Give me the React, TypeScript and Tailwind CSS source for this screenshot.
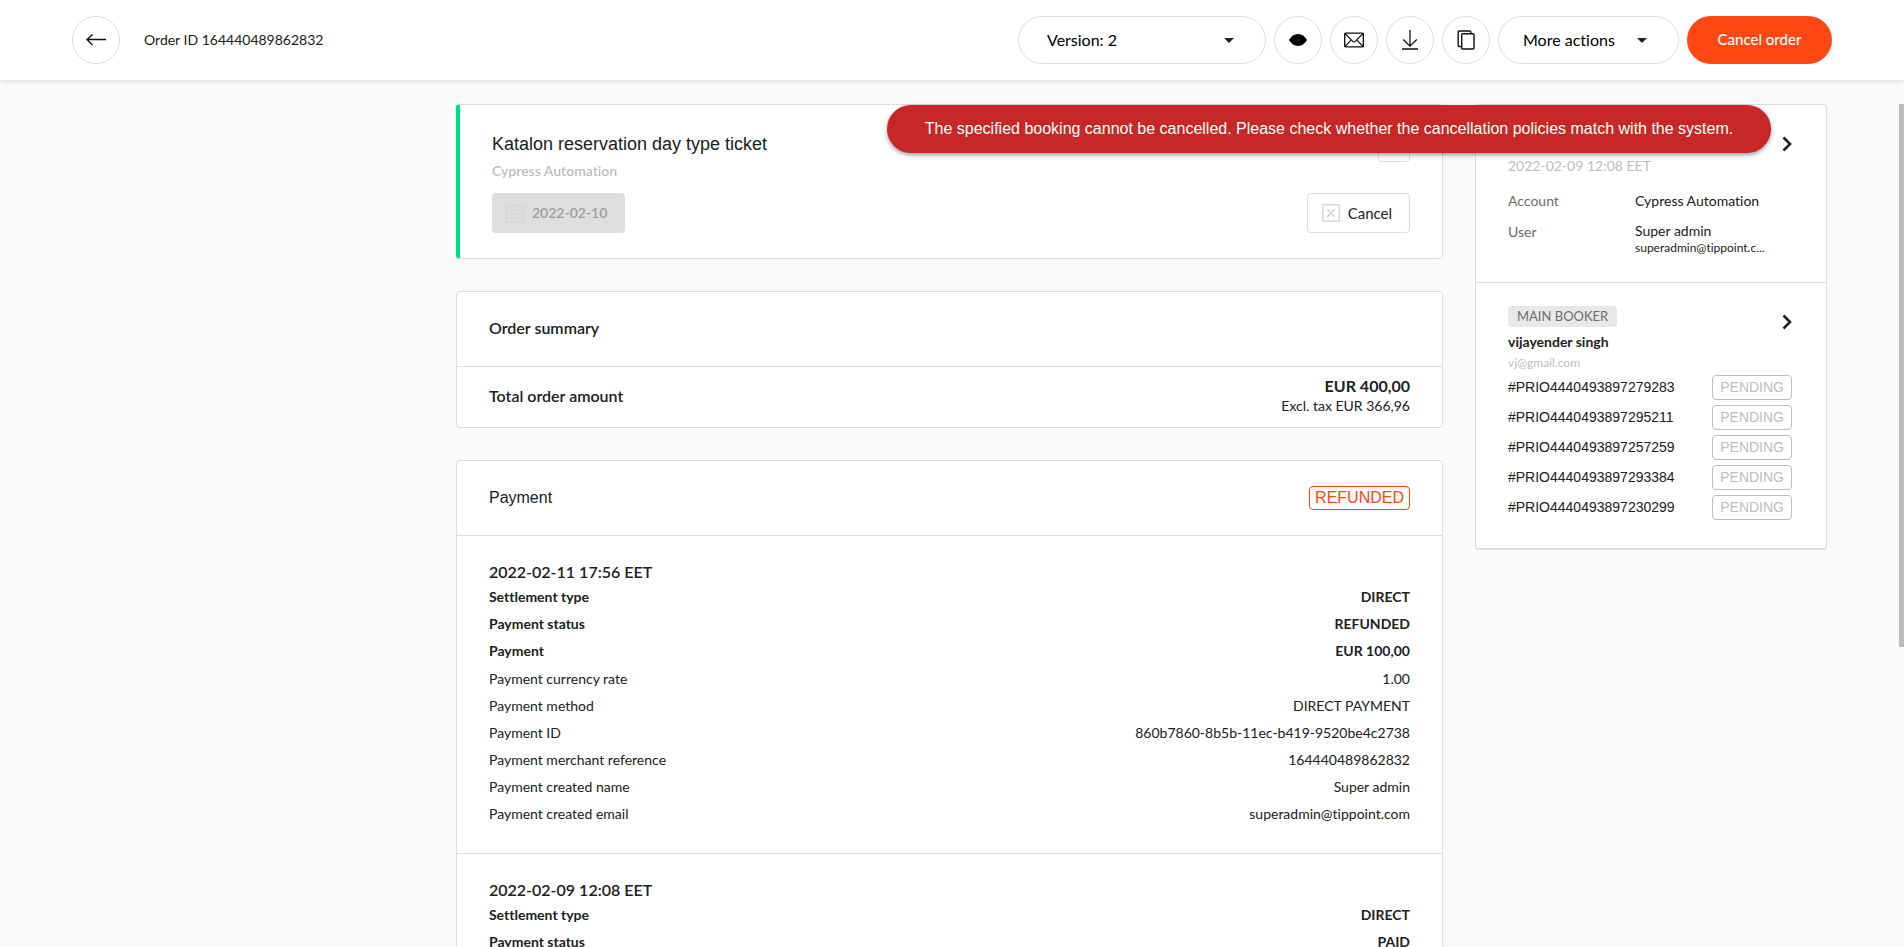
import type { ReactNode } from "react";

type Row = { label: string; value: string; strong?: boolean };

const refund: Row[] = [
  { label: "Settlement type", value: "DIRECT", strong: true },
  { label: "Payment status", value: "REFUNDED", strong: true },
  { label: "Payment", value: "EUR 100,00", strong: true },
  { label: "Payment currency rate", value: "1.00" },
  { label: "Payment method", value: "DIRECT PAYMENT" },
  { label: "Payment ID", value: "860b7860-8b5b-11ec-b419-9520be4c2738" },
  { label: "Payment merchant reference", value: "164440489862832" },
  { label: "Payment created name", value: "Super admin" },
  { label: "Payment created email", value: "superadmin@tippoint.com" },
];

const paid: Row[] = [
  { label: "Settlement type", value: "DIRECT", strong: true },
  { label: "Payment status", value: "PAID", strong: true },
];

const bookings = [
  "#PRIO4440493897279283",
  "#PRIO4440493897295211",
  "#PRIO4440493897257259",
  "#PRIO4440493897293384",
  "#PRIO4440493897230299",
];

function RoundButton({ label, children }: { label: string; children: ReactNode }) {
  return (
    <button
      type="button"
      aria-label={label}
      className="flex size-12 shrink-0 items-center justify-center rounded-full border border-[#dcdcdc] bg-white text-[#111]"
    >
      {children}
    </button>
  );
}

function Caret() {
  return (
    <svg width="10" height="5" viewBox="0 0 10 5" fill="#212121" aria-hidden="true">
      <path d="M0 0h10L5 5z" />
    </svg>
  );
}

function Chevron({ label }: { label: string }) {
  return (
    <button type="button" aria-label={label} className="flex h-6 w-3 items-center justify-end text-[#212121]">
      <svg width="10" height="16" viewBox="0 0 10 16" fill="none" stroke="currentColor" strokeWidth="2.6" aria-hidden="true">
        <path d="M1.500 1.500 8 8l-6.500 6.500" />
      </svg>
    </button>
  );
}

function Header() {
  return (
    <header className="relative z-10 flex h-20 shrink-0 items-center gap-2 bg-white px-[72px] shadow-[0_1px_5px_rgba(0,0,0,0.14)]">
      <RoundButton label="Back">
        <svg width="20" height="12" viewBox="0 0 20 12" fill="none" stroke="currentColor" strokeWidth="1.400" aria-hidden="true">
          <path d="M20 5.500H1M6.500 0.500 1 5.500l5.500 5.500" />
        </svg>
      </RoundButton>
      <h1 className="ml-4 flex-1 text-sm">Order ID 164440489862832</h1>
      <div className="relative flex items-center">
        <select
          aria-label="Order version"
          className="h-12 w-[248px] appearance-none rounded-full border border-[#dcdcdc] bg-white pl-7 text-base text-black"
        >
          <option>Version: 2</option>
        </select>
        <span className="pointer-events-none absolute right-8">
          <Caret />
        </span>
      </div>
      <RoundButton label="View order">
        <svg width="18" height="12" viewBox="0 0 18 12" aria-hidden="true">
          <path d="M0 6C2.200 2.200 5.300 0 9 0s6.800 2.200 9 6c-2.200 3.800-5.300 6-9 6S2.200 9.800 0 6z" fill="#000" />
          <circle cx="9" cy="6" r="2.200" fill="#141414" />
        </svg>
      </RoundButton>
      <RoundButton label="Email order">
        <svg width="20" height="16" viewBox="0 0 20 16" fill="none" stroke="currentColor" aria-hidden="true">
          <rect x="0.650" y="1.150" width="18.700" height="13.700" rx="1" strokeWidth="1.400" />
          <path d="M1 1.500 8.800 9.300a1.700 1.700 0 0 0 2.400 0L19 1.500M1 14.500l6.300-6.600M19 14.500l-6.300-6.600" strokeWidth="1.100" />
        </svg>
      </RoundButton>
      <RoundButton label="Download order">
        <svg width="18" height="20" viewBox="0 0 18 20" fill="none" stroke="currentColor" strokeWidth="1.300" aria-hidden="true">
          <path d="M9 0v16M2.200 9.500 9 16.200l6.800-6.700M1 19h16" />
        </svg>
      </RoundButton>
      <RoundButton label="Copy order">
        <svg width="18" height="20" viewBox="0 0 18 20" fill="none" stroke="currentColor" strokeWidth="1.400" aria-hidden="true">
          <rect x="4.700" y="3.700" width="12.300" height="15.300" rx="1" />
          <path d="M4.500 16.500H2.200a1 1 0 0 1-1-1V2a1 1 0 0 1 1-1h10.600a1 1 0 0 1 1 1v1.500" />
        </svg>
      </RoundButton>
      <button
        type="button"
        className="flex h-12 w-[181px] items-center justify-between rounded-full border border-[#dcdcdc] bg-white pr-[31px] pl-6 text-base text-black"
      >
        More actions
        <Caret />
      </button>
      <button type="button" className="h-12 w-[145px] rounded-full bg-[#ff4713] pb-0.5 text-[15px] font-medium text-white">
        Cancel order
      </button>
    </header>
  );
}

function PaymentSection({ title, rows }: { title: string; rows: Row[] }) {
  return (
    <section className="border-t border-[#dcdcdc] px-8 pt-6 pb-[26px]">
      <h3 className="text-base leading-6 font-semibold">{title}</h3>
      <dl className="text-sm">
        {rows.map((row) => (
          <div
            key={row.label}
            className={
              row.strong
                ? "flex h-[27px] items-center justify-between pb-0.5 font-bold"
                : "flex h-[27px] items-center justify-between"
            }
          >
            <dt>{row.label}</dt>
            <dd>{row.value}</dd>
          </div>
        ))}
      </dl>
    </section>
  );
}

function TicketCard() {
  return (
    <article className="flex justify-between rounded border border-l-4 border-[#dcdcdc] border-l-[#00dc82] bg-white px-8 pb-[25px]">
      <div className="flex flex-col items-start pt-[27px]">
        <h2 className="font-[Liberation_Sans,sans-serif] text-lg leading-6">Katalon reservation day type ticket</h2>
        <p className="mt-[3px] text-sm leading-6 font-semibold text-[#bdbdbd]">Cypress Automation</p>
        <button
          type="button"
          disabled
          className="mt-2.5 flex h-10 items-center gap-2 rounded bg-[#dedede] pr-[18px] pl-3.5 text-sm font-semibold text-[#9e9e9e]"
        >
          <svg width="18" height="20" viewBox="0 0 18 20" fill="none" stroke="#d6d6d6" strokeWidth="1.200" aria-hidden="true">
            <rect x="0.600" y="2.600" width="16.800" height="16.800" rx="1" />
            <path d="M1 6.500h16M4.500 0v4M13.500 0v4" />
            <path d="M4 11h2M8 11h2M12 11h2M4 15h2M8 15h2M12 15h2" strokeWidth="2" />
          </svg>
          2022-02-10
        </button>
      </div>
      <div className="flex flex-col items-end justify-between pt-[17px]">
        <button type="button" aria-label="Ticket options" className="h-10 w-8 rounded border border-[#dcdcdc] bg-white" />
        <button type="button" className="flex h-10 items-center gap-2 rounded border border-[#dcdcdc] bg-white pr-[17px] pl-3.5 text-[15px]">
          <svg width="18" height="18" viewBox="0 0 18 18" fill="none" stroke="#d8d8d8" aria-hidden="true">
            <rect x="0.750" y="0.750" width="16.500" height="16.500" strokeWidth="1.500" />
            <path d="m5.200 5.200 7.600 7.600M12.800 5.200l-7.600 7.600" strokeWidth="1.700" />
          </svg>
          Cancel
        </button>
      </div>
    </article>
  );
}

function Sidebar() {
  return (
    <aside className="w-[352px] shrink-0 self-start rounded border border-b-2 border-[#dcdcdc] bg-white text-sm">
      <section className="flex h-[177px] justify-between pr-[34px] pl-8">
        <div className="pt-[49px]">
          <p className="leading-6 text-[#bdbdbd]">2022-02-09 12:08 EET</p>
          <dl className="mt-[11px] grid grid-cols-[127px_1fr] gap-y-[7px]">
            <dt className="leading-6 text-[#6e6e6e]">Account</dt>
            <dd className="leading-6">Cypress Automation</dd>
            <dt className="leading-6 text-[#6e6e6e]">User</dt>
            <dd>
              <div className="leading-[22px]">Super admin</div>
              <div className="text-xs leading-3">superadmin@tippoint.c...</div>
            </dd>
          </dl>
        </div>
        <div className="-ml-3 pt-[27px]">
          <Chevron label="Open account details" />
        </div>
      </section>
      <section className="border-t border-[#dcdcdc] pt-[23px] pr-[34px] pb-[26px] pl-8">
        <div className="flex justify-between">
          <div className="flex flex-col items-start">
            <span className="rounded bg-[#e8e8e8] px-[9px] text-[13px] leading-[21px] text-[#6e6e6e]">MAIN BOOKER</span>
            <strong className="mt-[3px] leading-6 font-bold">vijayender singh</strong>
            <span className="text-xs leading-[18px] text-[#bdbdbd]">vj@gmail.com</span>
          </div>
          <div className="pt-1">
            <Chevron label="Open booker details" />
          </div>
        </div>
        <ul className="font-[Liberation_Sans,sans-serif]">
          {bookings.map((id) => (
            <li key={id} className="flex h-[30px] items-center justify-between">
              <span>{id}</span>
              <span className="rounded border border-[#bdbdbd] px-[7px] leading-[23px] text-[#bdbdbd]">PENDING</span>
            </li>
          ))}
        </ul>
      </section>
    </aside>
  );
}

export default function App() {
  return (
    <div className="relative flex h-screen flex-col overflow-hidden bg-[#fafafa] font-[Lato,sans-serif] text-[#212121] [font-variant-ligatures:none]">
      <Header />
      <main className="flex min-h-0 flex-1 gap-8 overflow-y-auto pt-6 pr-[77px] pl-[calc(24%-1px)] [scrollbar-width:none]">
        <div className="flex flex-1 flex-col gap-8">
          <TicketCard />
          <section className="rounded border border-[#dcdcdc] bg-white text-base font-semibold">
            <h2 className="px-8 pt-6 pb-[26px] leading-6">Order summary</h2>
            <div className="flex items-center justify-between border-t border-[#dcdcdc] px-8 pt-[9px] pb-[11px]">
              <span>Total order amount</span>
              <div className="text-right">
                <div className="leading-5 font-bold">EUR 400,00</div>
                <div className="text-sm leading-5 font-normal">Excl. tax EUR 366,96</div>
              </div>
            </div>
          </section>
          <section className="rounded border border-[#dcdcdc] bg-white">
            <header className="flex items-center justify-between px-8 py-[25px] font-[Liberation_Sans,sans-serif] leading-6">
              <h2>Payment</h2>
              <span className="rounded border border-[#ff4713] px-[5px] leading-[22px] text-[#ff4713]">REFUNDED</span>
            </header>
            <PaymentSection title="2022-02-11 17:56 EET" rows={refund} />
            <PaymentSection title="2022-02-09 12:08 EET" rows={paid} />
          </section>
        </div>
        <Sidebar />
      </main>
      <div
        role="alert"
        className="absolute top-[105px] right-[133px] z-20 flex h-12 w-[884px] items-center justify-center rounded-full bg-[#c62828] font-[Liberation_Sans,sans-serif] text-base text-white shadow-[0_2px_4px_rgba(0,0,0,0.4)]"
      >
        The specified booking cannot be cancelled. Please check whether the cancellation policies match with the system.
      </div>
      <div aria-hidden="true" className="absolute top-[104px] right-0 h-[543px] w-[5px] bg-[#bababa]" />
    </div>
  );
}
